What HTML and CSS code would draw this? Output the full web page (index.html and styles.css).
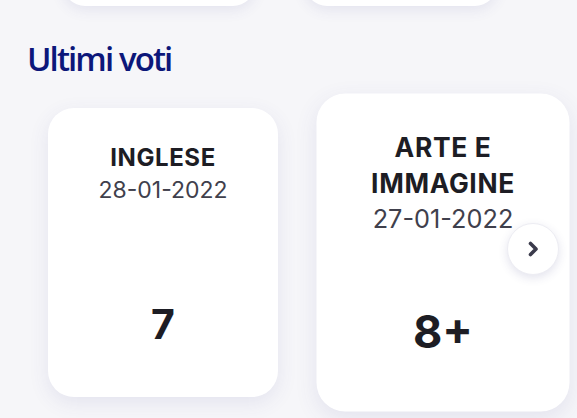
FILE: index.html
```html
<!DOCTYPE html>
<html lang="it">
<head>
<meta charset="utf-8">
<title>Ultimi voti</title>
<link rel="stylesheet" href="styles.css">
</head>
<body>
  <div class="top-row">
    <div class="top-card"></div>
    <div class="top-card"></div>
  </div>

  <h2 class="section-title">Ultimi voti</h2>

  <div class="grade-row">
    <div class="grade-card">
      <div class="subject">INGLESE</div>
      <div class="date">28-01-2022</div>
      <div class="grade">7</div>
    </div>
    <div class="grade-card active">
      <div class="subject">ARTE E IMMAGINE</div>
      <div class="date">27-01-2022</div>
      <div class="grade">8+</div>
    </div>
    <button class="next-btn" aria-label="Avanti">
      <svg width="24" height="24" viewBox="0 0 24 24" fill="none">
        <path d="M9.5 6.5 L15 12 L9.5 17.5" stroke="#3b3b4c" stroke-width="3.6" stroke-linecap="round" stroke-linejoin="round"/>
      </svg>
    </button>
  </div>
</body>
</html>
```

FILE: styles.css
```css
html, body {
  margin: 0;
  padding: 0;
}

body {
  width: 577px;
  height: 418px;
  overflow: hidden;
  background: #f6f6f9;
  font-family: "Inter", "Liberation Sans", sans-serif;
}

.top-row {
  display: flex;
  gap: 50px;
  padding-left: 63px;
  margin-top: -50px;
}

.top-card {
  width: 192px;
  height: 56px;
  background: #ffffff;
  border-radius: 22px;
  box-shadow: 0 4px 14px rgba(70, 70, 150, 0.10);
}

.section-title {
  margin: 33px 0 0 0;
  padding-left: 27px;
  font-family: "Open Sans", "Noto Sans", sans-serif;
  font-weight: 600;
  font-size: 33px;
  line-height: 40px;
  letter-spacing: -1.9px;
  color: #0c177a;
}

.grade-row {
  position: relative;
  display: flex;
  align-items: center;
  gap: 50px;
  padding-left: 48px;
  margin-top: 29px;
}

.grade-card {
  flex: 0 0 auto;
  width: 230px;
  height: 289px;
  box-sizing: border-box;
  padding: 34px 20px 49px;
  background: #ffffff;
  border-radius: 26px;
  box-shadow: 0 6px 20px rgba(70, 70, 150, 0.10);
  display: flex;
  flex-direction: column;
  align-items: center;
  text-align: center;
  color: #1d1d24;
}

.grade-card.active {
  transform: scale(1.1);
}

.subject {
  font-weight: 700;
  font-size: 24px;
  line-height: 32px;
  letter-spacing: 0.6px;
  color: #1d1d24;
}

.date {
  margin-top: 3px;
  font-weight: 400;
  font-size: 23px;
  line-height: 26px;
  color: #40404c;
}

.grade {
  margin-top: auto;
  font-weight: 700;
  font-size: 41px;
  line-height: 48px;
  color: #1d1d24;
}

.next-btn {
  position: absolute;
  left: 507px;
  top: 115px;
  width: 52px;
  height: 52px;
  padding: 0;
  border: 1px solid #ededf3;
  border-radius: 50%;
  background: #ffffff;
  box-shadow: 0 3px 10px rgba(60, 60, 130, 0.14);
  display: flex;
  align-items: center;
  justify-content: center;
}
```
